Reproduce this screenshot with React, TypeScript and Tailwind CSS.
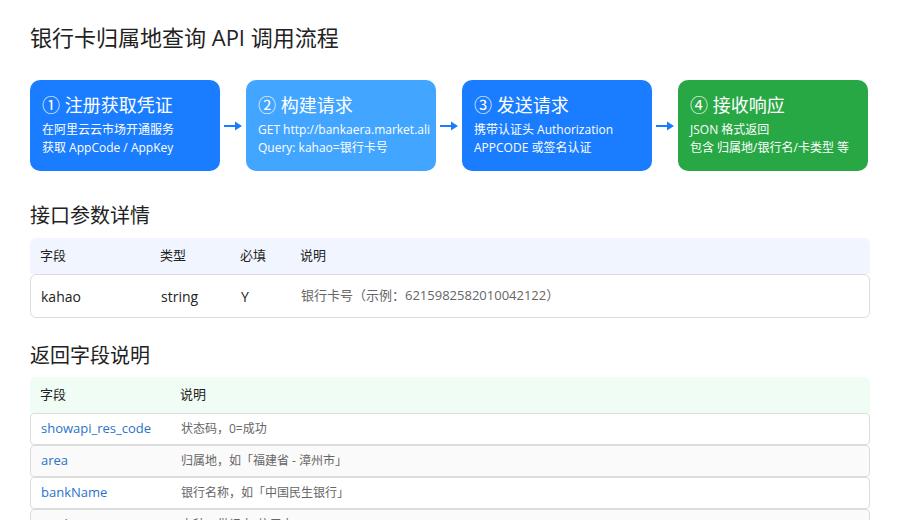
const FONT = { fontFamily: '"Open Sans", "Noto Sans CJK SC", sans-serif' };

const steps = [
  { title: '① 注册获取凭证', lines: ['在阿里云云市场开通服务', '获取 AppCode / AppKey'], bg: 'bg-[#1a7cff]' },
  { title: '② 构建请求', lines: ['GET http://bankaera.market.ali', 'Query: kahao=银行卡号'], bg: 'bg-[#42a5ff]' },
  { title: '③ 发送请求', lines: ['携带认证头 Authorization', 'APPCODE 或签名认证'], bg: 'bg-[#1a7cff]' },
  { title: '④ 接收响应', lines: ['JSON 格式返回', '包含 归属地/银行名/卡类型 等'], bg: 'bg-[#28a745]' },
];

const fields = [
  ['showapi_res_code', '状态码，0=成功'],
  ['area', '归属地，如「福建省 - 漳州市」'],
  ['bankName', '银行名称，如「中国民生银行」'],
  ['cardType', '卡种，借记卡/信用卡'],
];

function Arrow() {
  return (
    <svg width="26" height="12" viewBox="0 0 26 12" className="shrink-0">
      <line x1="4" y1="6" x2="16" y2="6" stroke="#1a7cff" strokeWidth="2" />
      <path d="M15 1.5 L22 6 L15 10.5 Z" fill="#1a7cff" />
    </svg>
  );
}

export default function App() {
  return (
    <div className="w-[900px] h-[520px] overflow-hidden bg-white px-[30px] pt-[22px] text-[#222]" style={FONT}>
      <h1 className="text-[22px] leading-[30px]">银行卡归属地查询 API 调用流程</h1>

      <div className="flex items-center mt-[28px]">
        {steps.map((s, i) => (
          <div key={i} className="flex items-center">
            {i > 0 && <Arrow />}
            <div className={`${s.bg} w-[190px] h-[91px] rounded-[10px] text-white px-[12px] pt-[12px] overflow-hidden whitespace-nowrap`}>
              <div className="text-[18px] leading-[26px]">{s.title}</div>
              <div className="text-[12px] leading-[18px] mt-[3px]">{s.lines[0]}</div>
              <div className="text-[12px] leading-[18px]">{s.lines[1]}</div>
            </div>
          </div>
        ))}
      </div>

      <h2 className="text-[20px] leading-[28px] mt-[31px]">接口参数详情</h2>
      <div className="mt-[8px] text-[13px]">
        <div className="flex items-center h-[36px] bg-[#f0f5ff] rounded-t-[6px] px-[10px]">
          <span className="w-[120px]">字段</span>
          <span className="w-[80px]">类型</span>
          <span className="w-[60px]">必填</span>
          <span>说明</span>
        </div>
        <div className="flex items-center h-[44px] border border-[#dcdcdc] rounded-[6px] px-[10px] text-[14px]">
          <span className="w-[120px]">kahao</span>
          <span className="w-[80px]">string</span>
          <span className="w-[60px]">Y</span>
          <span className="text-[13px] text-[#666]">银行卡号（示例：6215982582010042122）</span>
        </div>
      </div>

      <h2 className="text-[20px] leading-[28px] mt-[24px]">返回字段说明</h2>
      <div className="mt-[7px] text-[13px]">
        <div className="flex items-center h-[36px] bg-[#f0fdf4] rounded-t-[6px] px-[10px]">
          <span className="w-[140px]">字段</span>
          <span>说明</span>
        </div>
        {fields.map(([k, v], i) => (
          <div key={k} className={`flex items-center h-[32px] border border-[#dcdcdc] rounded-[4px] px-[10px] ${i % 2 ? 'bg-[#fafafa]' : 'bg-white'}`}>
            <span className="w-[140px] text-[#2a72c9]">{k}</span>
            <span className="text-[#666] text-[12px]">{v}</span>
          </div>
        ))}
      </div>
    </div>
  );
}
